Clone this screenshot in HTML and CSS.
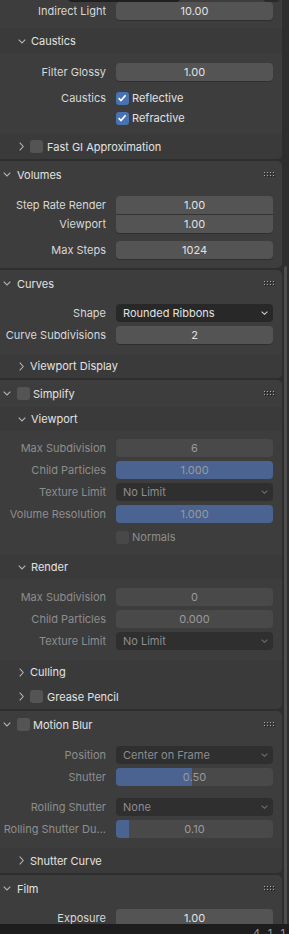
FILE: index.html
```html
<!DOCTYPE html>
<html lang="en">
<head>
  <meta charset="UTF-8" />
  <meta name="viewport" content="width=device-width, initial-scale=1.0"/>
  <title>Render Properties</title>
  <link rel="stylesheet" href="styles.css">
</head>
<body>

  <div class="region">
    <div class="panels">

      <!-- LIGHT PATHS (continued) -->
      <div class="panel first">
        <div class="stub">
          <span class="stub-a"></span>
          <span class="stub-b"></span>
        </div>
        <div class="row">
          <span class="lbl">Indirect Light</span>
          <span class="field">10.00</span>
        </div>

        <div class="sub-head caustics-head">
          <svg class="chev-down" width="8" height="5" viewBox="0 0 8 5"><polyline points="0.7,0.7 4,4 7.3,0.7"/></svg>
          <span>Caustics</span>
        </div>
        <div class="body caustics-body">
          <div class="row">
            <span class="lbl">Filter Glossy</span>
            <span class="field">1.00</span>
          </div>
          <div class="check-row first-check">
            <span class="lbl">Caustics</span>
            <span class="check on"><svg width="12" height="12" viewBox="0 0 12 12"><polyline points="2.6,6.2 5,8.6 9.6,3.2"/></svg></span>
            <span class="check-text">Reflective</span>
          </div>
          <div class="check-row">
            <span class="lbl"></span>
            <span class="check on"><svg width="12" height="12" viewBox="0 0 12 12"><polyline points="2.6,6.2 5,8.6 9.6,3.2"/></svg></span>
            <span class="check-text">Refractive</span>
          </div>
        </div>

        <div class="sub-head closed last-head">
          <svg class="chev-right" width="5" height="9" viewBox="0 0 5 9"><polyline points="0.7,0.7 4.2,4.5 0.7,8.3"/></svg>
          <span class="check"></span>
          <span>Fast GI Approximation</span>
        </div>
      </div>

      <!-- VOLUMES -->
      <div class="panel">
        <div class="head">
          <svg class="chev-down" width="8" height="5" viewBox="0 0 8 5"><polyline points="0.7,0.7 4,4 7.3,0.7"/></svg>
          <span>Volumes</span>
          <svg class="grip" width="11" height="5" viewBox="0 0 11 5"><g class="grip-dark"><rect x="1" y="1" width="1" height="1"/><rect x="4" y="1" width="1" height="1"/><rect x="7" y="1" width="1" height="1"/><rect x="10" y="1" width="1" height="1"/><rect x="1" y="4" width="1" height="1"/><rect x="4" y="4" width="1" height="1"/><rect x="7" y="4" width="1" height="1"/><rect x="10" y="4" width="1" height="1"/></g><g class="grip-light"><rect x="0" y="0" width="1" height="1"/><rect x="3" y="0" width="1" height="1"/><rect x="6" y="0" width="1" height="1"/><rect x="9" y="0" width="1" height="1"/><rect x="0" y="3" width="1" height="1"/><rect x="3" y="3" width="1" height="1"/><rect x="6" y="3" width="1" height="1"/><rect x="9" y="3" width="1" height="1"/></g></svg>
        </div>
        <div class="body volumes-body">
          <div class="row">
            <span class="lbl">Step Rate Render</span>
            <span class="field join-top">1.00</span>
          </div>
          <div class="row joined">
            <span class="lbl">Viewport</span>
            <span class="field join-bottom">1.00</span>
          </div>
          <div class="row gap8">
            <span class="lbl">Max Steps</span>
            <span class="field">1024</span>
          </div>
        </div>
      </div>

      <!-- CURVES -->
      <div class="panel">
        <div class="head">
          <svg class="chev-down" width="8" height="5" viewBox="0 0 8 5"><polyline points="0.7,0.7 4,4 7.3,0.7"/></svg>
          <span>Curves</span>
          <svg class="grip" width="11" height="5" viewBox="0 0 11 5"><g class="grip-dark"><rect x="1" y="1" width="1" height="1"/><rect x="4" y="1" width="1" height="1"/><rect x="7" y="1" width="1" height="1"/><rect x="10" y="1" width="1" height="1"/><rect x="1" y="4" width="1" height="1"/><rect x="4" y="4" width="1" height="1"/><rect x="7" y="4" width="1" height="1"/><rect x="10" y="4" width="1" height="1"/></g><g class="grip-light"><rect x="0" y="0" width="1" height="1"/><rect x="3" y="0" width="1" height="1"/><rect x="6" y="0" width="1" height="1"/><rect x="9" y="0" width="1" height="1"/><rect x="0" y="3" width="1" height="1"/><rect x="3" y="3" width="1" height="1"/><rect x="6" y="3" width="1" height="1"/><rect x="9" y="3" width="1" height="1"/></g></svg>
        </div>
        <div class="body curves-body">
          <div class="row">
            <span class="lbl">Shape</span>
            <span class="field menu">Rounded Ribbons
              <svg class="menu-chev" width="7" height="4" viewBox="0 0 7 4"><polyline points="0.6,0.6 3.5,3.3 6.4,0.6"/></svg>
            </span>
          </div>
          <div class="row gap4">
            <span class="lbl">Curve Subdivisions</span>
            <span class="field">2</span>
          </div>
        </div>
        <div class="sub-head closed last-head short">
          <svg class="chev-right" width="5" height="9" viewBox="0 0 5 9"><polyline points="0.7,0.7 4.2,4.5 0.7,8.3"/></svg>
          <span>Viewport Display</span>
        </div>
      </div>

      <!-- SIMPLIFY -->
      <div class="panel">
        <div class="head">
          <svg class="chev-down" width="8" height="5" viewBox="0 0 8 5"><polyline points="0.7,0.7 4,4 7.3,0.7"/></svg>
          <span class="check head-check"></span>
          <span>Simplify</span>
          <svg class="grip" width="11" height="5" viewBox="0 0 11 5"><g class="grip-dark"><rect x="1" y="1" width="1" height="1"/><rect x="4" y="1" width="1" height="1"/><rect x="7" y="1" width="1" height="1"/><rect x="10" y="1" width="1" height="1"/><rect x="1" y="4" width="1" height="1"/><rect x="4" y="4" width="1" height="1"/><rect x="7" y="4" width="1" height="1"/><rect x="10" y="4" width="1" height="1"/></g><g class="grip-light"><rect x="0" y="0" width="1" height="1"/><rect x="3" y="0" width="1" height="1"/><rect x="6" y="0" width="1" height="1"/><rect x="9" y="0" width="1" height="1"/><rect x="0" y="3" width="1" height="1"/><rect x="3" y="3" width="1" height="1"/><rect x="6" y="3" width="1" height="1"/><rect x="9" y="3" width="1" height="1"/></g></svg>
        </div>
        <div class="sub-head">
          <svg class="chev-down" width="8" height="5" viewBox="0 0 8 5"><polyline points="0.7,0.7 4,4 7.3,0.7"/></svg>
          <span>Viewport</span>
        </div>
        <div class="body off simplify-body">
          <div class="row">
            <span class="lbl">Max Subdivision</span>
            <span class="field">6</span>
          </div>
          <div class="row gap4">
            <span class="lbl">Child Particles</span>
            <span class="field blue">1.000</span>
          </div>
          <div class="row gap4">
            <span class="lbl">Texture Limit</span>
            <span class="field menu">No Limit
              <svg class="menu-chev" width="7" height="4" viewBox="0 0 7 4"><polyline points="0.6,0.6 3.5,3.3 6.4,0.6"/></svg>
            </span>
          </div>
          <div class="row gap4">
            <span class="lbl">Volume Resolution</span>
            <span class="field blue">1.000</span>
          </div>
          <div class="check-row gap4">
            <span class="lbl"></span>
            <span class="check"></span>
            <span class="check-text">Normals</span>
          </div>
        </div>
        <div class="sub-head render-head">
          <svg class="chev-down" width="8" height="5" viewBox="0 0 8 5"><polyline points="0.7,0.7 4,4 7.3,0.7"/></svg>
          <span>Render</span>
        </div>
        <div class="body off render-body">
          <div class="row">
            <span class="lbl">Max Subdivision</span>
            <span class="field">0</span>
          </div>
          <div class="row gap4">
            <span class="lbl">Child Particles</span>
            <span class="field">0.000</span>
          </div>
          <div class="row gap4">
            <span class="lbl">Texture Limit</span>
            <span class="field menu">No Limit
              <svg class="menu-chev" width="7" height="4" viewBox="0 0 7 4"><polyline points="0.6,0.6 3.5,3.3 6.4,0.6"/></svg>
            </span>
          </div>
        </div>
        <div class="sub-head closed culling-head">
          <svg class="chev-right" width="5" height="9" viewBox="0 0 5 9"><polyline points="0.7,0.7 4.2,4.5 0.7,8.3"/></svg>
          <span>Culling</span>
        </div>
        <div class="sub-head closed last-head">
          <svg class="chev-right" width="5" height="9" viewBox="0 0 5 9"><polyline points="0.7,0.7 4.2,4.5 0.7,8.3"/></svg>
          <span class="check"></span>
          <span>Grease Pencil</span>
        </div>
      </div>

      <!-- MOTION BLUR -->
      <div class="panel">
        <div class="head">
          <svg class="chev-down" width="8" height="5" viewBox="0 0 8 5"><polyline points="0.7,0.7 4,4 7.3,0.7"/></svg>
          <span class="check head-check"></span>
          <span>Motion Blur</span>
          <svg class="grip" width="11" height="5" viewBox="0 0 11 5"><g class="grip-dark"><rect x="1" y="1" width="1" height="1"/><rect x="4" y="1" width="1" height="1"/><rect x="7" y="1" width="1" height="1"/><rect x="10" y="1" width="1" height="1"/><rect x="1" y="4" width="1" height="1"/><rect x="4" y="4" width="1" height="1"/><rect x="7" y="4" width="1" height="1"/><rect x="10" y="4" width="1" height="1"/></g><g class="grip-light"><rect x="0" y="0" width="1" height="1"/><rect x="3" y="0" width="1" height="1"/><rect x="6" y="0" width="1" height="1"/><rect x="9" y="0" width="1" height="1"/><rect x="0" y="3" width="1" height="1"/><rect x="3" y="3" width="1" height="1"/><rect x="6" y="3" width="1" height="1"/><rect x="9" y="3" width="1" height="1"/></g></svg>
        </div>
        <div class="body off motion-body">
          <div class="row">
            <span class="lbl">Position</span>
            <span class="field menu">Center on Frame
              <svg class="menu-chev" width="7" height="4" viewBox="0 0 7 4"><polyline points="0.6,0.6 3.5,3.3 6.4,0.6"/></svg>
            </span>
          </div>
          <div class="row gap4">
            <span class="lbl">Shutter</span>
            <span class="field slider"><span class="fill" style="width: 48.5%"></span><span class="val">0.50</span></span>
          </div>
          <div class="row gap12">
            <span class="lbl">Rolling Shutter</span>
            <span class="field menu">None
              <svg class="menu-chev" width="7" height="4" viewBox="0 0 7 4"><polyline points="0.6,0.6 3.5,3.3 6.4,0.6"/></svg>
            </span>
          </div>
          <div class="row gap4">
            <span class="lbl">Rolling Shutter Du...</span>
            <span class="field slider"><span class="fill" style="width: 8.5%"></span><span class="val">0.10</span></span>
          </div>
        </div>
        <div class="sub-head closed last-head shutter-head">
          <svg class="chev-right" width="5" height="9" viewBox="0 0 5 9"><polyline points="0.7,0.7 4.2,4.5 0.7,8.3"/></svg>
          <span>Shutter Curve</span>
        </div>
      </div>

      <!-- FILM -->
      <div class="panel">
        <div class="head">
          <svg class="chev-down" width="8" height="5" viewBox="0 0 8 5"><polyline points="0.7,0.7 4,4 7.3,0.7"/></svg>
          <span>Film</span>
          <svg class="grip" width="11" height="5" viewBox="0 0 11 5"><g class="grip-dark"><rect x="1" y="1" width="1" height="1"/><rect x="4" y="1" width="1" height="1"/><rect x="7" y="1" width="1" height="1"/><rect x="10" y="1" width="1" height="1"/><rect x="1" y="4" width="1" height="1"/><rect x="4" y="4" width="1" height="1"/><rect x="7" y="4" width="1" height="1"/><rect x="10" y="4" width="1" height="1"/></g><g class="grip-light"><rect x="0" y="0" width="1" height="1"/><rect x="3" y="0" width="1" height="1"/><rect x="6" y="0" width="1" height="1"/><rect x="9" y="0" width="1" height="1"/><rect x="0" y="3" width="1" height="1"/><rect x="3" y="3" width="1" height="1"/><rect x="6" y="3" width="1" height="1"/><rect x="9" y="3" width="1" height="1"/></g></svg>
        </div>
        <div class="body film-body">
          <div class="row">
            <span class="lbl">Exposure</span>
            <span class="field">1.00</span>
          </div>
        </div>
      </div>

    </div>

    <div class="scrollbar"></div>
  </div>

  <div class="statusbar">4.1.1</div>

</body>
</html>
```

FILE: styles.css
```css
body {
  margin: 0;
  background: #2e2e2e;
  font-family: Inter, 'DejaVu Sans', sans-serif;
  font-size: 11px;
  color: #dedede;
  width: 289px;
  overflow: hidden;
}

.region {
  position: relative;
  height: 924px;
  overflow: hidden;
  background: #2e2e2e;
}

.panels {
  width: 282px;
  display: flex;
  flex-direction: column;
  gap: 2px;
}

.panel {
  background: #3d3d3d;
  border-radius: 0 5px 5px 0;
}

.panel.first {
  border-radius: 0 0 5px 0;
}

/* leftover row of the panel above */
.stub {
  height: 2px;
  position: relative;
}

.stub-a {
  position: absolute;
  left: 68px;
  top: -3px;
  width: 112px;
  height: 5px;
  background: #1f1f1f;
  border-radius: 0 0 4px 4px;
}

.stub-b {
  position: absolute;
  left: 263px;
  top: -3px;
  width: 17px;
  height: 5px;
  background: #2a2a2a;
  border-radius: 0 0 4px 4px;
}

/* headers */
.head {
  height: 27px;
  display: flex;
  align-items: center;
  padding-left: 3px;
  color: #e2e2e2;
}

.head .chev-down {
  margin-right: 6px;
}

.sub-head {
  height: 24px;
  display: flex;
  align-items: center;
  padding-left: 18px;
  background: #3a3a3a;
  color: #e2e2e2;
}

.sub-head .chev-down {
  margin-right: 5px;
}

.sub-head.closed {
  padding-left: 19px;
}

.sub-head.closed .chev-right {
  margin-right: 6px;
}

.sub-head .check {
  margin-right: 4px;
}

.sub-head.last-head {
  border-radius: 0 0 5px 0;
  height: 25px;
}

.sub-head.short {
  height: 24px;
}

.caustics-head {
  margin-top: 8px;
  height: 26px;
}

.culling-head {
  margin-top: 10px;
}

.shutter-head {
  margin-top: 10px;
  height: 24px;
}

.chev-down polyline,
.chev-right polyline {
  fill: none;
  stroke: #b4b4b4;
  stroke-width: 1.1;
}

.grip {
  margin-left: auto;
  margin-right: 7px;
}

.grip-light rect {
  fill: #a8a8a8;
}

.grip-dark rect {
  fill: #1c1c1c;
}

.head-check {
  margin-right: 3px;
}

/* bodies */
.caustics-body {
  padding: 9px 0 6px;
}

.volumes-body {
  padding: 8px 0 9px;
}

.curves-body {
  padding: 7px 0 10px;
}

.simplify-body {
  padding: 8px 0 8px;
}

.render-body {
  padding: 9px 0 0;
}

.motion-body {
  padding: 8px 0 0;
}

.film-body {
  padding: 7px 0 4px;
}

.row {
  display: flex;
  align-items: center;
  height: 18px;
}

.row.joined {
  margin-top: 1px;
}

.gap4 {
  margin-top: 4px;
}

.gap8 {
  margin-top: 8px;
}

.gap12 {
  margin-top: 12px;
}

.lbl {
  width: 106px;
  margin-right: 10px;
  text-align: right;
  white-space: nowrap;
  color: #d8d8d8;
  flex-shrink: 0;
}

.field {
  position: relative;
  width: 157px;
  height: 18px;
  line-height: 18px;
  border-radius: 4px;
  background: #545454;
  color: #e2e2e2;
  text-align: center;
  overflow: hidden;
  box-shadow: 0 1px 0 #2f2f2f;
}

.field.join-top {
  border-radius: 4px 4px 0 0;
  box-shadow: 0 1px 0 #343434;
}

.field.join-bottom {
  border-radius: 0 0 4px 4px;
}

.field.menu {
  background: #282828;
  text-align: left;
  padding-left: 7px;
  width: 150px;
  box-shadow: none;
}

.menu-chev {
  position: absolute;
  right: 5px;
  top: 7px;
}

.menu-chev polyline {
  fill: none;
  stroke: #cfcfcf;
  stroke-width: 1.1;
}

.field.blue {
  background: #4772b3;
}

.field.slider .fill {
  position: absolute;
  left: 0;
  top: 0;
  bottom: 0;
  background: #4772b3;
}

.field.slider .val {
  position: relative;
}

/* checkboxes */
.check-row {
  display: flex;
  align-items: center;
  height: 20px;
}

.first-check {
  margin-top: 7px;
}

.check {
  width: 13px;
  height: 13px;
  border-radius: 3px;
  background: #545454;
  flex-shrink: 0;
  display: flex;
}

.check.on {
  background: #4772b3;
}

.check svg polyline {
  fill: none;
  stroke: #ffffff;
  stroke-width: 1.7;
}

.check-text {
  margin-left: 3px;
  color: #e2e2e2;
}

/* disabled content */
.off .lbl,
.off .check-text {
  color: #8d8d8d;
}

.off .field {
  background: #494949;
  color: #9a9a9a;
  box-shadow: none;
}

.off .field.menu {
  background: #2f2f2f;
  color: #8d8d8d;
}

.off .field.blue,
.off .field.slider .fill {
  background: #4a6390;
}

.off .menu-chev polyline {
  stroke: #6f6f6f;
}

.off .check {
  background: #484848;
}

.scrollbar {
  position: absolute;
  left: 284px;
  top: 266px;
  width: 3px;
  height: 700px;
  border-radius: 2px;
  background: #4d4d4d;
}

.statusbar {
  height: 10px;
  background: #1d1d1d;
  color: #9a9a9a;
  text-align: right;
  padding-right: 1px;
  letter-spacing: 3px;
  line-height: 18px;
  overflow: hidden;
  box-sizing: border-box;
}
```
